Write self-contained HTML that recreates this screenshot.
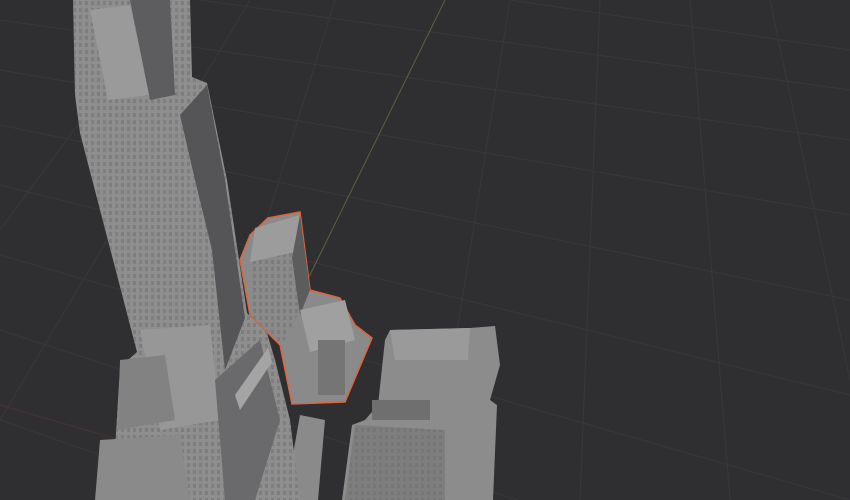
<!DOCTYPE html>
<html><head><style>
html,body{margin:0;padding:0;background:#2f2f32;width:850px;height:500px;overflow:hidden}
svg{display:block}
</style></head><body>
<svg width="850" height="500" viewBox="0 0 850 500" xmlns="http://www.w3.org/2000/svg">
<defs>
<pattern id="win" width="6" height="7" patternUnits="userSpaceOnUse">
<rect width="6" height="7" fill="none"/>
<rect x="1" y="1" width="3" height="4" fill="#6e6e6e" opacity="0.5"/>
</pattern>
</defs>
<rect width="850" height="500" fill="#2f2f32"/>
<g stroke="#38383c" stroke-width="1" fill="none">
<line x1="0" y1="20" x2="850" y2="140"/>
<line x1="0" y1="70" x2="850" y2="215"/>
<line x1="0" y1="125" x2="850" y2="300"/>
<line x1="0" y1="185" x2="850" y2="395"/>
<line x1="0" y1="255" x2="850" y2="500"/>
<line x1="0" y1="330" x2="700" y2="560"/>
<line x1="0" y1="420" x2="400" y2="560"/>
<line x1="200" y1="0" x2="850" y2="90"/>
<line x1="510" y1="0" x2="850" y2="50"/>
<line x1="335" y1="0" x2="180" y2="500"/>
<line x1="510" y1="0" x2="430" y2="500"/>
<line x1="600" y1="0" x2="580" y2="500"/>
<line x1="690" y1="0" x2="730" y2="500"/>
<line x1="770" y1="0" x2="850" y2="380"/>
<line x1="250" y1="0" x2="0" y2="420"/>
<line x1="170" y1="0" x2="0" y2="230"/>
</g>
<line x1="0" y1="405" x2="120" y2="440" stroke="#4a3232" stroke-width="1"/>
<line x1="445" y1="0" x2="305" y2="285" stroke="#5c6240" stroke-width="1"/>
<!-- building 3 -->
<polygon points="390,330 470,328 495,326 500,365 490,400 497,405 493,500 342,500 352,425 365,420 378,405 385,340" fill="#8c8c8c"/>
<polygon points="390,330 470,328 468,360 395,360" fill="#9a9a9a"/>
<polygon points="355,425 445,430 445,500 345,500" fill="#7e7e7e"/>
<polygon points="355,425 445,430 445,500 345,500" fill="url(#win)"/>
<polygon points="372,400 430,400 430,420 372,420" fill="#6f6f6f"/>
<!-- strip -->
<polygon points="300,415 325,420 318,500 285,500" fill="#8a8a8a"/>
<!-- building 2 selected -->
<polygon points="250,235 268,218 300,212 310,290 340,298 355,325 372,338 345,402 292,404 280,345 250,315 240,260" fill="#8a8a8a" stroke="#e0643a" stroke-width="1.5"/>
<polygon points="250,262 295,252 300,310 282,345 250,315" fill="url(#win)"/>
<polygon points="255,228 300,215 295,252 250,262" fill="#9c9c9c"/>
<polygon points="300,215 310,290 300,315 292,258" fill="#5c5c5c"/>
<polygon points="300,310 345,300 355,340 310,352" fill="#a0a0a0"/>
<polygon points="318,340 345,340 345,395 318,395" fill="#757575"/>
<!-- tower -->
<polygon points="73,0 190,0 192,77 207,83 227,180 247,313 267,333 275,360 290,420 300,500 100,500 115,450 120,367 137,352 80,133 75,95" fill="#8e8e8e"/>
<polygon points="73,0 190,0 192,77 207,83 227,180 247,313 267,333 275,360 290,420 300,500 100,500 115,450 120,367 137,352 80,133 75,95" fill="url(#win)"/>
<polygon points="180,115 207,85 225,180 245,318 225,370 212,250 195,180" fill="#555557"/>
<polygon points="90,10 130,5 150,95 108,100" fill="#9a9a9a"/>
<polygon points="130,0 170,0 175,95 150,100" fill="#5d5d5f"/>
<polygon points="140,330 210,325 220,420 160,430" fill="#979797"/>
<polygon points="215,380 260,340 280,420 255,500 225,500" fill="#6a6a6c"/>
<polygon points="120,360 165,355 175,420 118,430" fill="#828282"/>
<polygon points="100,440 180,435 190,500 95,500" fill="#8a8a8a"/>
<polygon points="235,395 268,348 272,362 240,410" fill="#a4a4a4"/>
</svg>
</body></html>
